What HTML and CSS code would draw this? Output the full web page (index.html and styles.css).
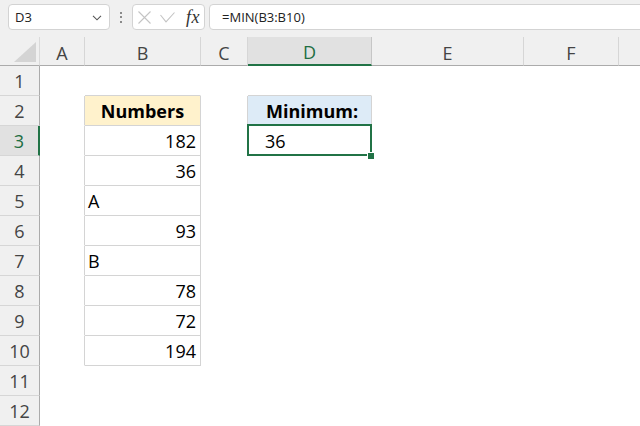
FILE: index.html
```html
<!DOCTYPE html>
<html>
<head>
<meta charset="utf-8">
<link rel="stylesheet" href="styles.css">
</head>
<body>
<div class="app">
  <div class="toolbar">
    <div class="namebox">
      <span class="name">D3</span>
      <svg class="chev" width="10" height="6" viewBox="0 0 10 6"><path d="M1 0.8 L5 4.8 L9 0.8" fill="none" stroke="#555" stroke-width="1.1"/></svg>
    </div>
    <div class="dots"><span></span><span></span><span></span></div>
    <div class="fxbox">
      <svg width="13" height="13" viewBox="0 0 13 13"><path d="M0.5 0.5 L12.5 12.5 M12.5 0.5 L0.5 12.5" stroke="#c4c4c4" stroke-width="1.1" fill="none"/></svg>
      <svg width="15" height="11" viewBox="0 0 15 11"><path d="M0.5 3 L6 9.8 L14.5 0.5" stroke="#c4c4c4" stroke-width="1.1" fill="none"/></svg>
      <span class="fx">fx</span>
    </div>
    <div class="formula">=MIN(B3:B10)</div>
  </div>
  <div class="sheet">
    <div class="corner"><svg width="22" height="20" viewBox="0 0 22 20"><path d="M22 0 L22 20 L0 20 Z" fill="#d4d4d4"/></svg></div>
    <div class="ch">A</div>
    <div class="ch">B</div>
    <div class="ch">C</div>
    <div class="ch sel">D</div>
    <div class="ch">E</div>
    <div class="ch">F</div>
    <div class="ch last"></div>

    <div class="rh">1</div><div class="c"></div><div class="c tb"></div><div class="c"></div><div class="c tb"></div><div class="c"></div><div class="c"></div><div class="c"></div>
    <div class="rh">2</div><div class="c tr"></div><div class="c tbl hdr-y">Numbers</div><div class="c tr"></div><div class="c tbl hdr-b">Minimum:</div><div class="c"></div><div class="c"></div><div class="c"></div>
    <div class="rh sel">3</div><div class="c tr"></div><div class="c tbl num">182</div><div class="c"></div><div class="c active">36<div class="selbox"></div><div class="handle"></div></div><div class="c"></div><div class="c"></div><div class="c"></div>
    <div class="rh">4</div><div class="c tr"></div><div class="c tbl num">36</div><div class="c"></div><div class="c"></div><div class="c"></div><div class="c"></div><div class="c"></div>
    <div class="rh">5</div><div class="c tr"></div><div class="c tbl">A</div><div class="c"></div><div class="c"></div><div class="c"></div><div class="c"></div><div class="c"></div>
    <div class="rh">6</div><div class="c tr"></div><div class="c tbl num">93</div><div class="c"></div><div class="c"></div><div class="c"></div><div class="c"></div><div class="c"></div>
    <div class="rh">7</div><div class="c tr"></div><div class="c tbl">B</div><div class="c"></div><div class="c"></div><div class="c"></div><div class="c"></div><div class="c"></div>
    <div class="rh">8</div><div class="c tr"></div><div class="c tbl num">78</div><div class="c"></div><div class="c"></div><div class="c"></div><div class="c"></div><div class="c"></div>
    <div class="rh">9</div><div class="c tr"></div><div class="c tbl num">72</div><div class="c"></div><div class="c"></div><div class="c"></div><div class="c"></div><div class="c"></div>
    <div class="rh">10</div><div class="c tr"></div><div class="c tbl num">194</div><div class="c"></div><div class="c"></div><div class="c"></div><div class="c"></div><div class="c"></div>
    <div class="rh">11</div><div class="c"></div><div class="c"></div><div class="c"></div><div class="c"></div><div class="c"></div><div class="c"></div><div class="c"></div>
    <div class="rh">12</div><div class="c"></div><div class="c"></div><div class="c"></div><div class="c"></div><div class="c"></div><div class="c"></div><div class="c"></div>
  </div>
</div>
</body>
</html>
```
FILE: styles.css
```css
* { box-sizing: border-box; }
html, body { margin: 0; padding: 0; }
body {
  width: 640px;
  height: 426px;
  overflow: hidden;
  background: #ffffff;
  font-family: "Open Sans", "Liberation Sans", sans-serif;
}
.app { width: 640px; height: 426px; overflow: hidden; }

.toolbar {
  height: 37px;
  background: #f0f0f0;
  display: flex;
  align-items: flex-start;
  padding-top: 4px;
  padding-left: 8px;
  overflow: hidden;
}
.namebox {
  width: 102px;
  height: 26px;
  background: #fff;
  border: 1px solid #d3d3d3;
  border-radius: 4px;
  display: flex;
  align-items: center;
  justify-content: space-between;
  padding: 0 7px 0 6px;
  flex: none;
}
.name { font-size: 13px; color: #222; }
.chev { margin-top: 1px; }
.dots {
  width: 22px;
  height: 26px;
  display: flex;
  flex-direction: column;
  align-items: center;
  justify-content: center;
  gap: 2.5px;
  flex: none;
}
.dots span { width: 2px; height: 2px; background: #8a8a8a; display: block; }
.fxbox {
  width: 73px;
  height: 26px;
  background: #fff;
  border: 1px solid #d3d3d3;
  border-radius: 4px;
  display: flex;
  align-items: center;
  padding-left: 5px;
  gap: 9px;
  flex: none;
}
.fx {
  font-family: "Liberation Serif", "DejaVu Serif", serif;
  font-style: italic;
  font-size: 18px;
  color: #333;
  margin-left: 2px;
  letter-spacing: 0.5px;
  line-height: 1;
}
.formula {
  margin-left: 4px;
  width: 460px;
  height: 26px;
  background: #fff;
  border: 1px solid #d3d3d3;
  border-radius: 4px;
  font-size: 13px;
  color: #222;
  padding-left: 12px;
  display: flex;
  align-items: center;
  flex: none;
}

.sheet {
  display: grid;
  grid-template-columns: 40px 45px 116px 47px 124px 152px 95px 1fr;
  grid-template-rows: 29px repeat(12, 30px);
}
.corner {
  background: #f0f0f0;
  border-bottom: 1px solid #ababab;
  border-right: 1px solid #dadada;
  display: flex;
  align-items: flex-end;
  justify-content: flex-end;
  padding: 0 3px 3px 0;
}
.ch {
  background: #f0f0f0;
  border-right: 1px solid #d6d6d6;
  border-bottom: 1px solid #ababab;
  display: flex;
  align-items: center;
  justify-content: center;
  font-size: 18px;
  color: #444;
  padding-top: 3px;
}
.ch.last { border-right: none; }
.ch.sel {
  background: #e1e1e1;
  color: #1e6e42;
  border-bottom: 2px solid #217346;
  border-right-color: #c6c6c6;
}
.rh {
  background: #f0f0f0;
  border-right: 1px solid #ababab;
  border-bottom: 1px solid #d6d6d6;
  display: flex;
  align-items: center;
  justify-content: center;
  font-size: 18px;
  color: #444;
  line-height: 1;
  padding-top: 1px;
}
.rh.sel {
  background: #e1e1e1;
  color: #1e6e42;
  border-right: 2px solid #217346;
}

.c {
  border-right: 1px solid transparent;
  border-bottom: 1px solid transparent;
  font-size: 18px;
  color: #000;
  display: flex;
  align-items: center;
  padding: 0 3px;
  white-space: nowrap;
  line-height: 1;
  padding-top: 1px;
}
.c.tb { border-bottom-color: #d4d4d4; }
.c.tr { border-right-color: #d4d4d4; }
.c.tbl { border-right-color: #d4d4d4; border-bottom-color: #d4d4d4; }
.c.num { justify-content: flex-end; padding-right: 4px; }
.hdr-y { background: #fff2cc; font-weight: 700; justify-content: center; }
.hdr-b { background: #ddebf7; font-weight: 700; justify-content: center; padding-left: 8px; }
.active { position: relative; padding-left: 17px; }
.selbox {
  position: absolute;
  left: -1px;
  top: -2px;
  width: 125px;
  height: 32px;
  border: 2px solid #217346;
}
.handle {
  position: absolute;
  left: 119px;
  top: 26px;
  width: 7px;
  height: 7px;
  background: #217346;
  border: 1px solid #fff;
  border-right: none;
  border-bottom: none;
}
```
